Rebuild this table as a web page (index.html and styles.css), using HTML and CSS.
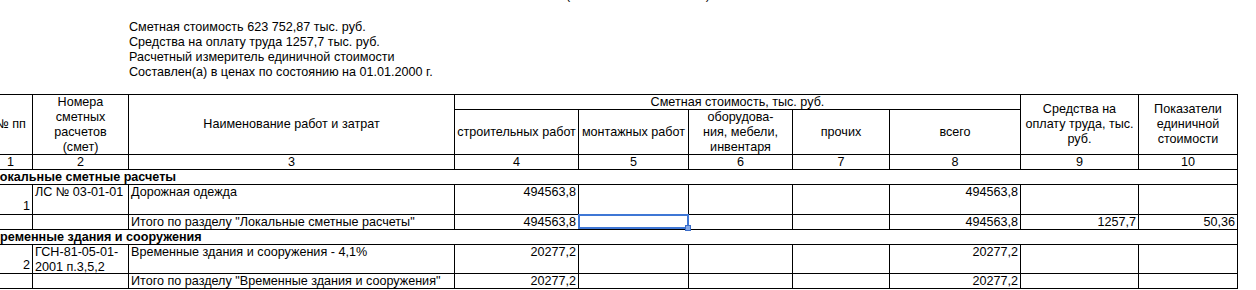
FILE: index.html
```html
<!DOCTYPE html>
<html lang="ru">
<head>
<meta charset="utf-8">
<title>Сводный сметный расчет</title>
<link rel="stylesheet" href="styles.css">
</head>
<body>
<div class="page">
  <div class="caption">(наименование объекта)</div>
  <div class="summary">
    <div>Сметная стоимость 623 752,87 тыс. руб.</div>
    <div>Средства на оплату труда 1257,7 тыс. руб.</div>
    <div>Расчетный измеритель единичной стоимости</div>
    <div>Составлен(а) в ценах по состоянию на 01.01.2000 г.</div>
  </div>

  <div class="sheet" role="table">
    <!-- header -->
    <div class="c h c1 span2r">№ пп</div>
    <div class="c h c2 span2r">Номера<br>сметных<br>расчетов<br>(смет)</div>
    <div class="c h c3 span2r">Наименование работ и затрат</div>
    <div class="c h group">Сметная стоимость, тыс. руб.</div>
    <div class="c h c9 span2r">Средства на<br>оплату труда, тыс.<br>руб.</div>
    <div class="c h c10 span2r">Показатели<br>единичной<br>стоимости</div>
    <div class="c h">строительных работ</div>
    <div class="c h">монтажных работ</div>
    <div class="c h">оборудова-<br>ния, мебели,<br>инвентаря</div>
    <div class="c h">прочих</div>
    <div class="c h">всего</div>

    <!-- column numbers -->
    <div class="c n">1</div>
    <div class="c n">2</div>
    <div class="c n">3</div>
    <div class="c n">4</div>
    <div class="c n">5</div>
    <div class="c n">6</div>
    <div class="c n">7</div>
    <div class="c n">8</div>
    <div class="c n">9</div>
    <div class="c n">10</div>

    <!-- section 1 -->
    <div class="c section">Локальные сметные расчеты</div>

    <div class="c pos">1</div>
    <div class="c">ЛС № 03-01-01</div>
    <div class="c">Дорожная одежда</div>
    <div class="c num">494563,8</div>
    <div class="c num"></div>
    <div class="c num"></div>
    <div class="c num"></div>
    <div class="c num">494563,8</div>
    <div class="c num"></div>
    <div class="c num"></div>

    <div class="c pos"></div>
    <div class="c"></div>
    <div class="c">Итого по разделу "Локальные сметные расчеты"</div>
    <div class="c num">494563,8</div>
    <div class="c num selected"><span class="sel-frame"><span class="sel-handle"></span></span></div>
    <div class="c num"></div>
    <div class="c num"></div>
    <div class="c num">494563,8</div>
    <div class="c num">1257,7</div>
    <div class="c num">50,36</div>

    <!-- section 2 -->
    <div class="c section">Временные здания и сооружения</div>

    <div class="c pos">2</div>
    <div class="c">ГСН-81-05-01-<br>2001 п.3,5,2</div>
    <div class="c">Временные здания и сооружения - 4,1%</div>
    <div class="c num">20277,2</div>
    <div class="c num"></div>
    <div class="c num"></div>
    <div class="c num"></div>
    <div class="c num">20277,2</div>
    <div class="c num"></div>
    <div class="c num"></div>

    <div class="c pos"></div>
    <div class="c"></div>
    <div class="c">Итого по разделу "Временные здания и сооружения"</div>
    <div class="c num">20277,2</div>
    <div class="c num"></div>
    <div class="c num"></div>
    <div class="c num"></div>
    <div class="c num">20277,2</div>
    <div class="c num"></div>
    <div class="c num"></div>
  </div>
</div>
</body>
</html>
```

FILE: styles.css
```css
html, body {
  margin: 0;
  padding: 0;
  background: #ffffff;
}

body {
  font-family: "Liberation Sans", Arial, sans-serif;
  font-size: 12.6px;
  line-height: 15px;
  color: #000000;
  overflow: hidden;
}

.page {
  width: 1256px;
}

.caption {
  height: 15px;
  margin-top: -12px;
  margin-left: 566px;
  white-space: nowrap;
}

.summary {
  margin-top: 17px;
  padding-left: 129px;
  height: 60px;
}

.summary div {
  white-space: nowrap;
}

.sheet {
  margin-top: 14px;
  margin-left: -12px;
  width: 1250px;
  box-sizing: border-box;
  display: grid;
  grid-template-columns: 44px 96px 326px 124px 110px 104px 97px 131px 118px 99px;
  grid-template-rows: 15px 45px 15px 15px 30px 15px 15px 29px 15px;
  border-right: 1px solid #000;
  border-bottom: 1px solid #000;
}

.c {
  box-sizing: border-box;
  border-left: 1px solid #000;
  border-top: 1px solid #000;
  padding: 0 2px;
  white-space: nowrap;
  overflow: visible;
  min-width: 0;
}

.h {
  display: flex;
  align-items: center;
  justify-content: center;
  text-align: center;
}

.span2r {
  grid-row: span 2;
}

.group {
  grid-column: 4 / span 5;
}

.n {
  text-align: center;
}

.section {
  grid-column: 1 / -1;
  font-weight: bold;
}

.num {
  text-align: right;
}

.pos {
  display: flex;
  align-items: flex-end;
  justify-content: flex-end;
}

.selected {
  position: relative;
}

.sel-frame {
  position: absolute;
  top: -1px;
  left: -1px;
  width: 111px;
  height: 15px;
  box-sizing: border-box;
  border: 2px solid #3f77d5;
  z-index: 2;
}

.sel-handle {
  position: absolute;
  right: -4px;
  bottom: -4px;
  width: 6px;
  height: 6px;
  box-sizing: border-box;
  background: #86a9e6;
  border: 1px solid #3a6cc8;
}
```
